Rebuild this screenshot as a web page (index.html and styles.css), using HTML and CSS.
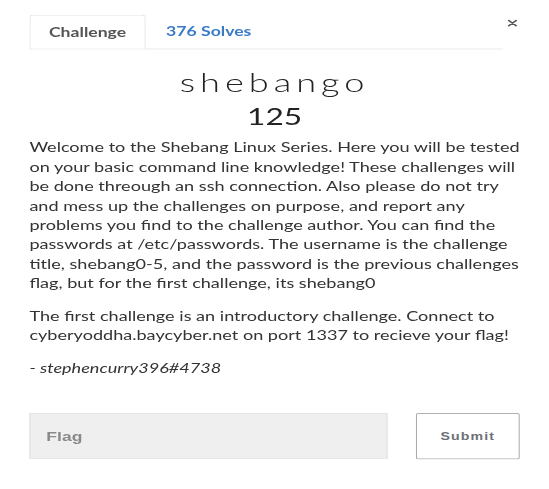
FILE: index.html
```html
<!DOCTYPE html>
<html>
<head>
<meta charset="utf-8">
<link rel="stylesheet" href="styles.css">
</head>
<body>
<div class="stage">
  <div class="modal">
    <div class="tabs-row">
      <nav class="tabs">
        <a class="tab active">Challenge</a>
        <a class="tab">376 Solves</a>
      </nav>
      <button class="close" aria-label="Close">
        <svg viewBox="0 0 12 12" width="11" height="13"><path d="M2.5 2.5 L9.5 9.5 M9.5 2.5 L2.5 9.5" stroke="#555" stroke-width="1.8" stroke-linecap="round"/></svg>
      </button>
    </div>
    <div class="body">
      <h2 class="title">shebango</h2>
      <h3 class="value">125</h3>
      <div class="desc">
        <p>Welcome to the Shebang Linux Series. Here you will be tested on your basic command line knowledge! These challenges will be done threough an ssh connection. Also please do not try and mess up the challenges on purpose, and report any problems you find to the challenge author. You can find the passwords at /etc/passwords. The username is the challenge title, shebang0-5, and the password is the previous challenges flag, but for the first challenge, its shebang0</p>
        <p>The first challenge is an introductory challenge. Connect to cyberyoddha.baycyber.net on port 1337 to recieve your flag!</p>
        <p class="author">- stephencurry396#4738</p>
      </div>
      <form class="submit-row">
        <input class="flag" type="text" placeholder="Flag">
        <button class="submit" type="button">Submit</button>
      </form>
    </div>
  </div>
</div>
</body>
</html>
```

FILE: styles.css
```css
html, body {
  margin: 0;
  padding: 0;
  background: #fff;
  overflow: hidden;
}
body {
  height: 489px;
}
.stage {
  width: 486px;
  transform: scale(1.13, 0.81);
  transform-origin: 0 0;
}
.modal {
  font-family: Lato, "Open Sans", sans-serif;
  color: #333;
  padding: 18px 0 0 26px;
  box-sizing: border-box;
  width: 486px;
}
.tabs-row {
  display: flex;
  align-items: flex-start;
}
.tabs {
  display: flex;
  width: 419px;
  border-bottom: 1px solid #e6e6e6;
  height: 43px;
  box-sizing: border-box;
}
.tab {
  display: block;
  padding: 0 0 0 18px;
  font-size: 15.6px;
  font-weight: 700;
  line-height: 42px;
  color: #3a7bc8;
  text-decoration: none;
}
.tab.active {
  color: #555;
  border: 1px solid #e3e3e3;
  border-bottom: 1px solid #fff;
  border-radius: 4px 4px 0 0;
  height: 43px;
  box-sizing: border-box;
  width: 103px;
  text-align: center;
  padding: 0;
  margin-bottom: -1px;
}
.close {
  border: 0;
  background: none;
  padding: 0;
  margin: 4px 0 0 3px;
  width: 11px;
  height: 13px;
  display: flex;
}
.body {
  width: 434px;
}
.title {
  margin: 21px 0 0;
  text-align: center;
  font-weight: 300;
  font-size: 32px;
  letter-spacing: 4.4px;
  line-height: 38px;
  color: #222;
}
.value {
  margin: 5px 0 0;
  text-align: center;
  font-weight: 400;
  font-size: 28px;
  line-height: 36px;
  color: #222;
}
.desc {
  margin-top: 9px;
  font-size: 16px;
  line-height: 24px;
  color: #333;
}
.desc p {
  margin: 0 0 16px;
}
.author {
  font-style: italic;
}
.submit-row {
  display: flex;
  justify-content: space-between;
  margin-top: 44px;
}
.flag {
  width: 317px;
  height: 57px;
  box-sizing: border-box;
  background: #efefef;
  border: 1px solid #e2e2e2;
  padding: 0 14px;
  font-family: "Liberation Sans", Arial, sans-serif;
  font-weight: 700;
  font-size: 15.5px;
  color: #777;
}
.flag::placeholder {
  color: #8a8a8a;
}
.submit {
  width: 92px;
  height: 57px;
  box-sizing: border-box;
  background: #fff;
  border: 1.5px solid #a9a9a9;
  border-radius: 2px;
  font-family: "Liberation Sans", Arial, sans-serif;
  font-weight: 700;
  font-size: 12.5px;
  letter-spacing: 1px;
  color: #6c7177;
}
```
